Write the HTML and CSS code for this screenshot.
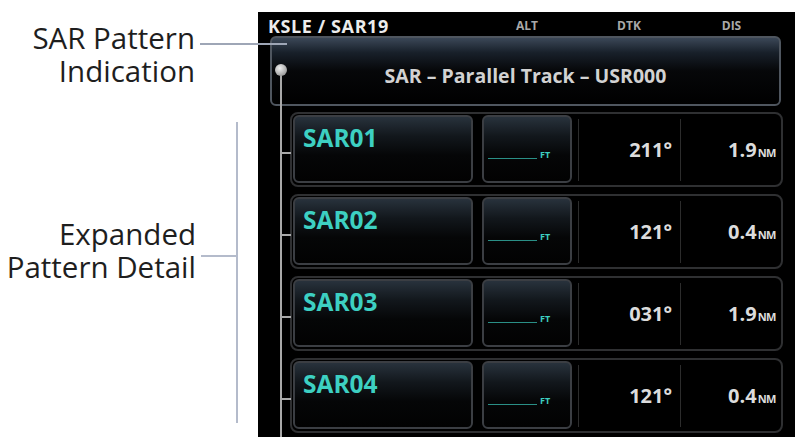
FILE: index.html
```html
<!DOCTYPE html>
<html>
<head>
<meta charset="utf-8">
<link rel="stylesheet" href="styles.css">
</head>
<body>
<div class="page">
  <div class="notes">
    <div class="note note-top">
      <div class="label"><span class="ln">SAR Pattern</span><span class="ln">Indication</span></div>
      <div class="leader"></div>
    </div>
    <div class="note note-bottom">
      <div class="label label-low"><span class="ln">Expanded</span><span class="ln">Pattern Detail</span></div>
      <div class="hline"></div>
      <div class="vbar"></div>
    </div>
  </div>
  <div class="screen">
    <div class="hdr">
      <div class="title">KSLE / SAR19</div>
      <div class="col col-alt">ALT</div>
      <div class="col col-dtk">DTK</div>
      <div class="col col-dis">DIS</div>
    </div>
    <div class="list">
      <span class="dot"></span>
      <div class="pattern">SAR – Parallel Track – USR000</div>
      <div class="rows">
        <div class="row">
          <div class="btn name">SAR01</div>
          <div class="btn altb"><span class="dash"></span><span class="ft">FT</span></div>
          <div class="cell dtkv">211°</div>
          <div class="cell disv">1.9<span class="nm">NM</span></div>
        </div>
        <div class="row">
          <div class="btn name">SAR02</div>
          <div class="btn altb"><span class="dash"></span><span class="ft">FT</span></div>
          <div class="cell dtkv">121°</div>
          <div class="cell disv">0.4<span class="nm">NM</span></div>
        </div>
        <div class="row">
          <div class="btn name">SAR03</div>
          <div class="btn altb"><span class="dash"></span><span class="ft">FT</span></div>
          <div class="cell dtkv">031°</div>
          <div class="cell disv">1.9<span class="nm">NM</span></div>
        </div>
        <div class="row">
          <div class="btn name">SAR04</div>
          <div class="btn altb"><span class="dash"></span><span class="ft">FT</span></div>
          <div class="cell dtkv">121°</div>
          <div class="cell disv">0.4<span class="nm">NM</span></div>
        </div>
      </div>
    </div>
  </div>
</div>
</body>
</html>
```
FILE: styles.css
```css
html, body {
  margin: 0;
  padding: 0;
  background: #ffffff;
}
.page {
  display: flex;
  align-items: flex-start;
  width: 803px;
  height: 443px;
  overflow: hidden;
}
.notes {
  width: 258px;
  flex: none;
  padding-top: 21px;
  display: flex;
  flex-direction: column;
}
.note {
  display: flex;
  justify-content: flex-end;
  align-items: flex-start;
}
.note-top {
  margin-right: -29px;
  position: relative;
  z-index: 3;
}
.label {
  display: flex;
  flex-direction: column;
  align-items: flex-end;
  font-family: "Open Sans", "Noto Sans", sans-serif;
  font-size: 29.5px;
  color: #1e1e1e;
  white-space: nowrap;
}
.ln {
  display: block;
  height: 33px;
  line-height: 33px;
}
.leader {
  width: 87px;
  height: 2px;
  margin-left: 5px;
  margin-top: 22px;
  background: #9ea6b6;
}
.note-bottom {
  margin-top: 35px;
  margin-right: 20px;
}
.label-low {
  margin-top: 95px;
}
.hline {
  width: 35px;
  height: 2px;
  margin-left: 5px;
  margin-top: 133px;
  background: #b4bbcb;
}
.vbar {
  width: 2px;
  height: 301px;
  background: #b4bbcb;
}
.screen {
  margin-top: 12px;
  width: 537px;
  height: 425px;
  flex: none;
  background: #000;
  overflow: hidden;
  font-family: "Open Sans", "Noto Sans", sans-serif;
  font-weight: 700;
}
.hdr {
  height: 24px;
  display: flex;
  align-items: flex-end;
  padding-right: 12px;
}
.title {
  flex: 1;
  padding-left: 10px;
  font-size: 18px;
  line-height: 20px;
  letter-spacing: 0.6px;
  color: #ececec;
}
.col {
  font-size: 12px;
  line-height: 14px;
  margin-bottom: 3px;
  color: #a9a9a9;
  text-align: center;
}
.col-alt { width: 90px; margin-right: 6px; }
.col-dtk { width: 102px; }
.col-dis { width: 103px; }
.list {
  position: relative;
  padding: 0 14px 0 12px;
}
.list::before {
  content: "";
  position: absolute;
  left: 22px;
  top: 34px;
  bottom: -20px;
  width: 2px;
  background: #a9a9a9;
}
.dot {
  position: absolute;
  left: 17px;
  top: 28px;
  width: 12px;
  height: 12px;
  border-radius: 50%;
  background: radial-gradient(circle at 40% 35%, #f0f0f0 0%, #b8b8b8 50%, #7a7a7a 100%);
  z-index: 2;
}
.pattern {
  height: 70px;
  box-sizing: border-box;
  border: 2px solid #4f565f;
  border-radius: 6px;
  background: linear-gradient(to bottom, #3b4757 0%, #18202a 22%, #060709 50%, #000 100%);
  display: flex;
  align-items: center;
  justify-content: center;
  padding-top: 9px;
  font-size: 19.5px;
  line-height: 24px;
  color: #d2d2d2;
}
.rows {
  margin: 6px -2px 0 20px;
  display: flex;
  flex-direction: column;
  gap: 7px;
}
.row {
  position: relative;
  height: 75px;
  box-sizing: border-box;
  border: 2px solid #2f3032;
  border-radius: 8px;
  padding: 1px 1px 0 1px;
  display: flex;
  align-items: flex-start;
}
.row::before {
  content: "";
  position: absolute;
  left: -11px;
  top: 38px;
  width: 10px;
  height: 2px;
  background: #a9a9a9;
}
.btn {
  height: 68px;
  box-sizing: border-box;
  border: 2px solid #3b3e43;
  border-radius: 6px;
  background: linear-gradient(to bottom, #28323c 0%, #12171c 30%, #050607 60%, #020202 100%);
}
.name {
  width: 180px;
  margin-right: 9px;
  padding: 6px 0 0 8px;
  font-size: 24.5px;
  line-height: 30px;
  color: #3dd0c2;
}
.altb {
  width: 90px;
  margin-right: 6px;
  display: flex;
  align-items: center;
  padding: 12px 0 0 4px;
}
.dash {
  width: 49px;
  height: 1px;
  background: #2a8f86;
  margin-top: 6px;
}
.ft {
  margin-left: 3px;
  font-size: 9px;
  line-height: 10px;
  color: #3dd0c2;
}
.cell {
  align-self: center;
  height: 62px;
  box-sizing: border-box;
  border-left: 1px solid #2c2c2c;
  display: flex;
  align-items: center;
  justify-content: flex-end;
  font-size: 20px;
  line-height: 24px;
  color: #dcdcdc;
}
.dtkv {
  width: 102px;
  padding-right: 8px;
}
.disv {
  flex: 1;
  padding-right: 4px;
  align-items: baseline;
  padding-top: 19px;
}
.nm {
  font-size: 11px;
  margin-left: 1px;
  letter-spacing: -0.5px;
}
```
